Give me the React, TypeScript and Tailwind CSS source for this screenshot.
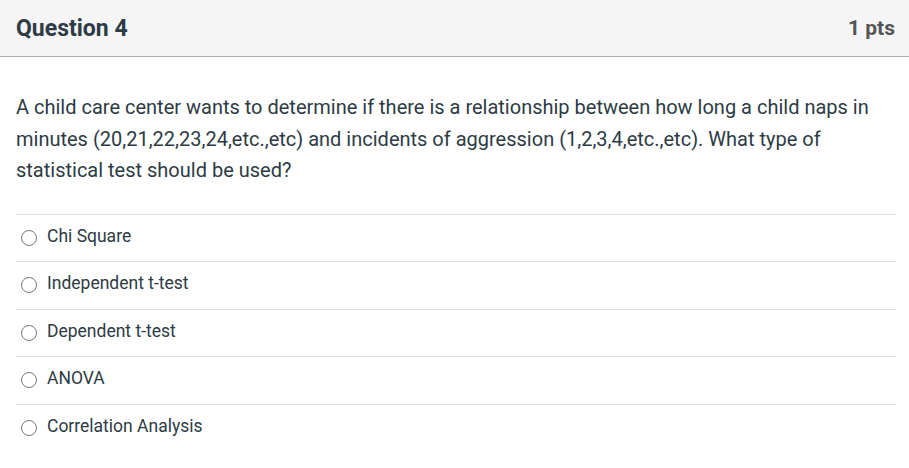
const OPTIONS = [
  'Chi Square',
  'Independent t-test',
  'Dependent t-test',
  'ANOVA',
  'Correlation Analysis',
]

export default function App() {
  return (
    <div className="w-[909px] h-[468px] bg-white font-['Roboto',sans-serif] text-[#2d3b45]">
      <div className="flex h-[57px] items-center justify-between border-b border-[#aaaaaa] bg-[#f5f5f5] pl-4 pr-[14px]">
        <h2 className="mt-[2px] text-[23px] font-bold text-[#2d3b45]">Question 4</h2>
        <span className="mt-[2px] text-[21px] font-bold text-[#555555]">1 pts</span>
      </div>
      <div className="pl-4 pr-[13px]">
        <p className="pt-[35px] text-[20px] leading-[31.5px]">
          A child care center wants to determine if there is a relationship between how long a child naps in
          <br />
          minutes (20,21,22,23,24,etc.,etc) and incidents of aggression (1,2,3,4,etc.,etc). What type of
          <br />
          statistical test should be used?
        </p>
        <div className="mt-[27px]">
          {OPTIONS.map((opt) => (
            <label
              key={opt}
              className="flex h-[47.5px] items-center border-t border-[#dddddd] text-[17.5px]"
            >
              <span className="ml-[5px] mr-[10px] h-4 w-4 shrink-0 rounded-full border-[1.5px] border-[#777777] bg-white" />
              <span className="-mt-[4px]">{opt}</span>
            </label>
          ))}
        </div>
      </div>
    </div>
  )
}
